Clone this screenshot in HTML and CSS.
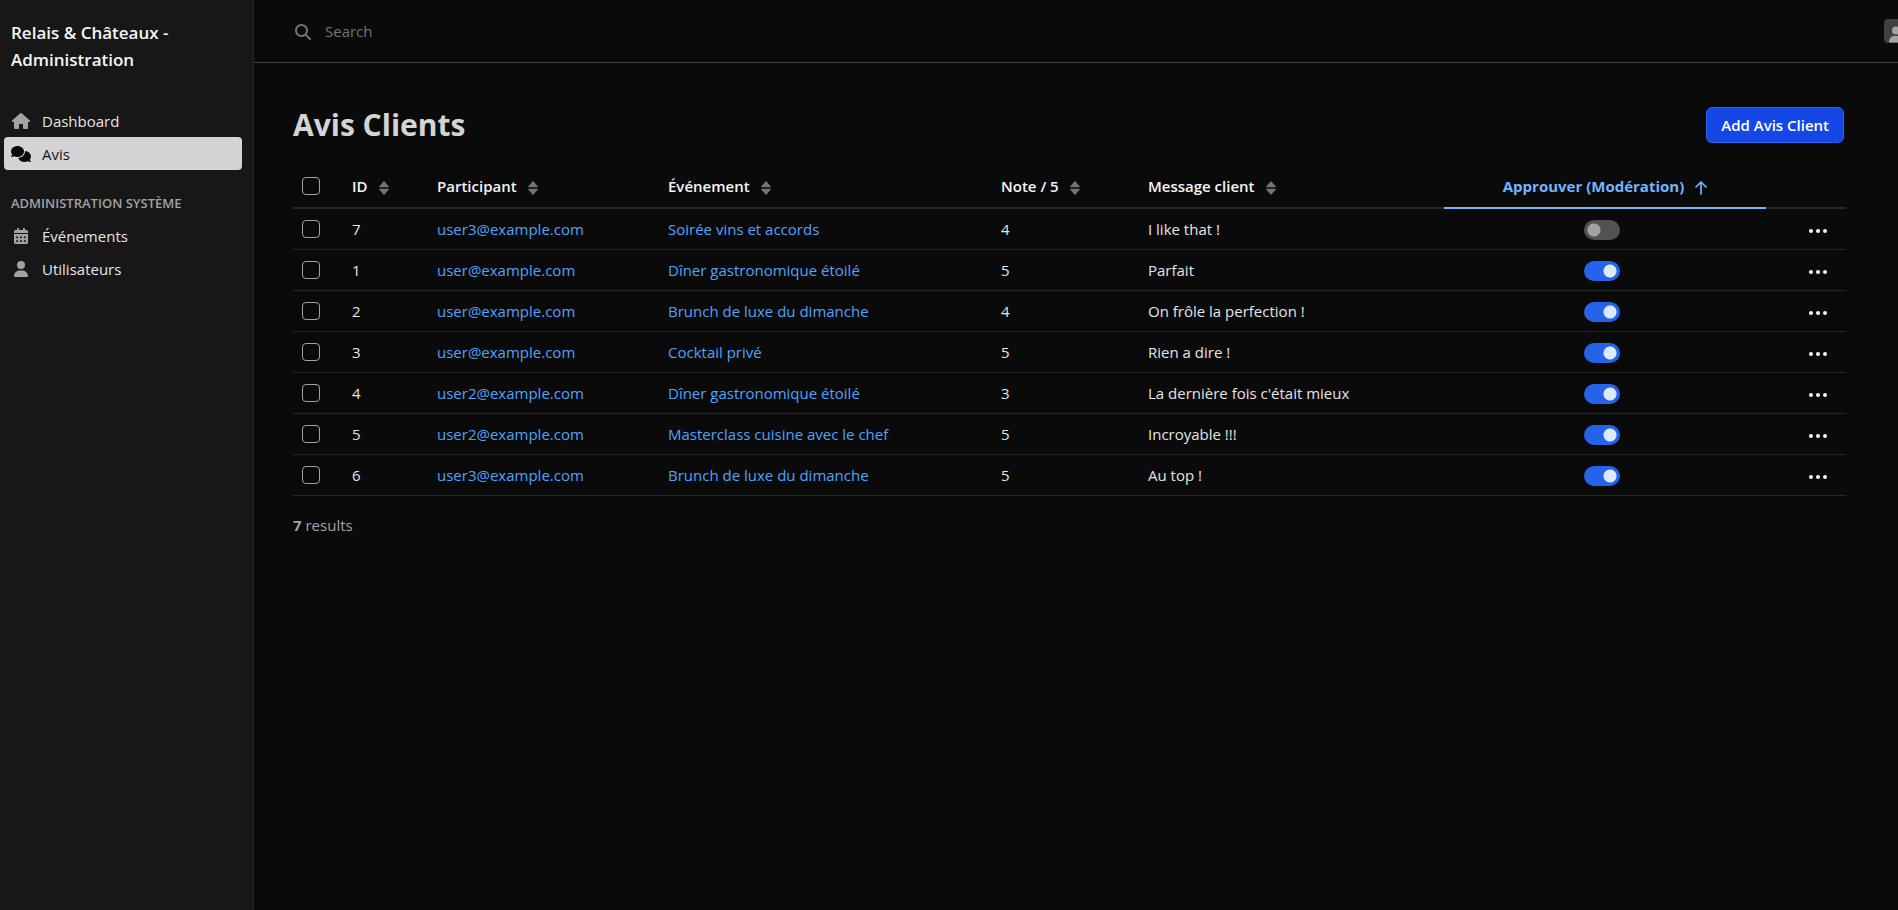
FILE: index.html
```html
<!DOCTYPE html>
<html lang="fr">
<head>
    <meta charset="UTF-8">
    <meta name="viewport" content="width=device-width, initial-scale=1">
    <title>Avis Clients</title>
    <link rel="stylesheet" href="styles.css">
</head>
<body>
    <!-- Icônes -->
    <svg class="sprite" aria-hidden="true">
        <symbol id="i-house" viewBox="0 0 576 512"><path d="M575.8 255.5c0 18-15 32.1-32 32.1h-32l.7 160.2c0 2.7-.2 5.4-.5 8.1V472c0 22.1-17.9 40-40 40H392c-22.1 0-40-17.9-40-40V384c0-17.7-14.3-32-32-32H256c-17.7 0-32 14.3-32 32v88c0 22.1-17.9 40-40 40H104c-22.1 0-40-17.9-40-40V287.6H32c-18 0-32-14-32-32.1c0-9 3-17 10-24L266.4 8c7-7 15-8 22-8s15 2 21 7L564.8 231.5c8 7 12 15 11 24z"/></symbol>
        <symbol id="i-comments" viewBox="0 0 640 512"><path d="M208 352c114.9 0 208-78.8 208-176S322.9 0 208 0S0 78.8 0 176c0 38.6 14.7 74.3 39.6 103.4c-3.5 9.4-8.7 17.7-14.2 24.7c-4.8 6.2-9.7 11-13.3 14.3c-1.8 1.6-3.3 2.9-4.3 3.7l-1.3 1C1 327.2-1.4 334.4 .8 340.9S9.1 352 16 352c21.8 0 43.8-5.6 62.1-12.5c9.2-3.5 17.8-7.4 25.3-11.4C134.1 343.3 169.8 352 208 352zM448 176c0 112.3-99.1 196.9-216.5 207C255.8 457.4 336.4 512 432 512c38.2 0 73.9-8.7 104.7-23.9c7.5 4 16 7.9 25.2 11.4c18.3 6.9 40.3 12.5 62.1 12.5c6.9 0 13.1-4.5 15.2-11.1c2.1-6.6-.2-13.8-5.8-17.9l-1.3-1c-1-.8-2.5-2-4.3-3.7c-3.6-3.3-8.5-8.1-13.3-14.3c-5.5-7-10.7-15.4-14.2-24.7c24.9-29 39.6-64.7 39.6-103.4c0-92.8-84.9-168.9-192.6-175.5c.4 5.1 .6 10.3 .6 15.5z"/></symbol>
        <symbol id="i-calendar" viewBox="0 0 448 512"><path fill-rule="evenodd" d="M128 0c17.7 0 32 14.3 32 32V64H288V32c0-17.7 14.3-32 32-32s32 14.3 32 32V64h48c26.5 0 48 21.5 48 48v48H0V112C0 85.5 21.5 64 48 64H96V32c0-17.7 14.3-32 32-32zM0 192H448V464c0 26.5-21.5 48-48 48H48c-26.5 0-48-21.5-48-48V192zM72 268v56h60v-56zM194 268v56h60v-56zM316 268v56h60v-56zM72 390v56h60v-56zM194 390v56h60v-56zM316 390v56h60v-56z"/></symbol>
        <symbol id="i-user" viewBox="0 0 448 512"><path d="M224 256A128 128 0 1 0 224 0a128 128 0 1 0 0 256zm-45.7 48C79.8 304 0 383.8 0 482.3C0 498.7 13.3 512 29.7 512H418.3c16.4 0 29.7-13.3 29.7-29.7C448 383.8 368.2 304 269.7 304H178.3z"/></symbol>
        <symbol id="i-search" viewBox="0 0 512 512"><path d="M416 208c0 45.9-14.9 88.3-40 122.7L502.6 457.4c12.5 12.5 12.5 32.8 0 45.3s-32.8 12.5-45.3 0L330.7 376c-34.4 25.2-76.8 40-122.7 40C93.1 416 0 322.9 0 208S93.1 0 208 0S416 93.1 416 208zM208 352a144 144 0 1 0 0-288 144 144 0 1 0 0 288z"/></symbol>
        <symbol id="i-sort" viewBox="0 0 10 14"><path d="M5 0L9.7 5.2Q10.2 6.2 9 6.2H1Q-.2 6.2 .3 5.2zM5 14L9.7 8.8Q10.2 7.8 9 7.8H1Q-.2 7.8 .3 8.8z"/></symbol>
        <symbol id="i-up" viewBox="0 0 12 14"><path fill="none" stroke="currentColor" stroke-width="1.7" stroke-linecap="round" stroke-linejoin="round" d="M6 13V1M1 6l5-5 5 5"/></symbol>
        <symbol id="i-dots" viewBox="0 0 18 4"><circle cx="2" cy="2" r="2"/><circle cx="9" cy="2" r="2"/><circle cx="16" cy="2" r="2"/></symbol>
    </svg>

    <div class="wrapper">
        <aside class="sidebar">
            <a href="#" class="logo">Relais &amp; Châteaux - Administration</a>
            <nav class="menu">
                <a href="#" class="menu-item"><span class="menu-icon"><svg><use href="#i-house"/></svg></span>Dashboard</a>
                <a href="#" class="menu-item active"><span class="menu-icon"><svg><use href="#i-comments"/></svg></span>Avis</a>
                <h2 class="menu-header">Administration système</h2>
                <a href="#" class="menu-item"><span class="menu-icon"><svg><use href="#i-calendar"/></svg></span>Événements</a>
                <a href="#" class="menu-item"><span class="menu-icon"><svg><use href="#i-user"/></svg></span>Utilisateurs</a>
            </nav>
        </aside>

        <div class="main">
            <header class="topbar">
                <form class="search">
                    <label for="search"><svg class="search-icon"><use href="#i-search"/></svg></label>
                    <input type="search" id="search" placeholder="Search" aria-label="Search">
                </form>
                <button class="avatar" type="button" aria-label="Utilisateur"><svg><use href="#i-user"/></svg></button>
            </header>

            <main class="content">
                <div class="page-header">
                    <h1>Avis Clients</h1>
                    <button class="btn-primary" type="button">Add Avis Client</button>
                </div>

                <table class="datagrid">
                    <colgroup>
                        <col class="col-check">
                        <col class="col-id">
                        <col class="col-user">
                        <col class="col-event">
                        <col class="col-note">
                        <col class="col-message">
                        <col class="col-approve">
                        <col class="col-actions">
                    </colgroup>
                    <thead>
                        <tr>
                            <th><input type="checkbox" class="check" aria-label="Tout sélectionner"></th>
                            <th><a href="#">ID<svg class="sort"><use href="#i-sort"/></svg></a></th>
                            <th><a href="#">Participant<svg class="sort"><use href="#i-sort"/></svg></a></th>
                            <th><a href="#">Événement<svg class="sort"><use href="#i-sort"/></svg></a></th>
                            <th><a href="#">Note / 5<svg class="sort"><use href="#i-sort"/></svg></a></th>
                            <th><a href="#">Message client<svg class="sort"><use href="#i-sort"/></svg></a></th>
                            <th class="sorted"><a href="#">Approuver (Modération)<svg class="sort-up"><use href="#i-up"/></svg></a></th>
                            <th></th>
                        </tr>
                    </thead>
                    <tbody>
                        <tr>
                            <td><input type="checkbox" class="check" aria-label="Avis 7"></td>
                            <td>7</td>
                            <td><a href="#">user3@example.com</a></td>
                            <td><a href="#">Soirée vins et accords</a></td>
                            <td>4</td>
                            <td>I like that !</td>
                            <td class="center"><input type="checkbox" class="switch" aria-label="Approuver 7"></td>
                            <td class="actions"><button type="button" aria-label="Actions"><svg><use href="#i-dots"/></svg></button></td>
                        </tr>
                        <tr>
                            <td><input type="checkbox" class="check" aria-label="Avis 1"></td>
                            <td>1</td>
                            <td><a href="#">user@example.com</a></td>
                            <td><a href="#">Dîner gastronomique étoilé</a></td>
                            <td>5</td>
                            <td>Parfait</td>
                            <td class="center"><input type="checkbox" class="switch" aria-label="Approuver 1" checked></td>
                            <td class="actions"><button type="button" aria-label="Actions"><svg><use href="#i-dots"/></svg></button></td>
                        </tr>
                        <tr>
                            <td><input type="checkbox" class="check" aria-label="Avis 2"></td>
                            <td>2</td>
                            <td><a href="#">user@example.com</a></td>
                            <td><a href="#">Brunch de luxe du dimanche</a></td>
                            <td>4</td>
                            <td>On frôle la perfection !</td>
                            <td class="center"><input type="checkbox" class="switch" aria-label="Approuver 2" checked></td>
                            <td class="actions"><button type="button" aria-label="Actions"><svg><use href="#i-dots"/></svg></button></td>
                        </tr>
                        <tr>
                            <td><input type="checkbox" class="check" aria-label="Avis 3"></td>
                            <td>3</td>
                            <td><a href="#">user@example.com</a></td>
                            <td><a href="#">Cocktail privé</a></td>
                            <td>5</td>
                            <td>Rien a dire !</td>
                            <td class="center"><input type="checkbox" class="switch" aria-label="Approuver 3" checked></td>
                            <td class="actions"><button type="button" aria-label="Actions"><svg><use href="#i-dots"/></svg></button></td>
                        </tr>
                        <tr>
                            <td><input type="checkbox" class="check" aria-label="Avis 4"></td>
                            <td>4</td>
                            <td><a href="#">user2@example.com</a></td>
                            <td><a href="#">Dîner gastronomique étoilé</a></td>
                            <td>3</td>
                            <td>La dernière fois c'était mieux</td>
                            <td class="center"><input type="checkbox" class="switch" aria-label="Approuver 4" checked></td>
                            <td class="actions"><button type="button" aria-label="Actions"><svg><use href="#i-dots"/></svg></button></td>
                        </tr>
                        <tr>
                            <td><input type="checkbox" class="check" aria-label="Avis 5"></td>
                            <td>5</td>
                            <td><a href="#">user2@example.com</a></td>
                            <td><a href="#">Masterclass cuisine avec le chef</a></td>
                            <td>5</td>
                            <td>Incroyable !!!</td>
                            <td class="center"><input type="checkbox" class="switch" aria-label="Approuver 5" checked></td>
                            <td class="actions"><button type="button" aria-label="Actions"><svg><use href="#i-dots"/></svg></button></td>
                        </tr>
                        <tr>
                            <td><input type="checkbox" class="check" aria-label="Avis 6"></td>
                            <td>6</td>
                            <td><a href="#">user3@example.com</a></td>
                            <td><a href="#">Brunch de luxe du dimanche</a></td>
                            <td>5</td>
                            <td>Au top !</td>
                            <td class="center"><input type="checkbox" class="switch" aria-label="Approuver 6" checked></td>
                            <td class="actions"><button type="button" aria-label="Actions"><svg><use href="#i-dots"/></svg></button></td>
                        </tr>
                    </tbody>
                </table>

                <p class="results"><strong>7</strong> results</p>
            </main>
        </div>
    </div>
</body>
</html>
```

FILE: styles.css
```css
* {
    box-sizing: border-box;
}

body {
    margin: 0;
    background: #0a0a0a;
    color: #e5e5e5;
    font-family: "Segoe UI", "Open Sans", "Noto Sans", sans-serif;
    font-size: 15px;
    line-height: 20px;
    overflow-x: hidden;
}

a {
    color: inherit;
    text-decoration: none;
}

button, input {
    font: inherit;
    margin: 0;
}

svg {
    display: block;
    fill: currentColor;
}

.sprite {
    display: none;
}

.wrapper {
    display: flex;
    min-height: 100vh;
}

/* Menu latéral */
.sidebar {
    flex: none;
    width: 254px;
    padding: 19px 11px 0 4px;
    background: #171717;
    border-right: 1px solid #262626;
}

.logo {
    display: block;
    padding: 0 7px;
    color: #f5f5f5;
    font-size: 17px;
    font-weight: 600;
    line-height: 27px;
}

.menu {
    margin-top: 31px;
}

.menu-item {
    display: flex;
    align-items: center;
    gap: 12px;
    height: 33px;
    padding: 0 7px;
    border-radius: 4px;
}

.menu-icon {
    display: flex;
    justify-content: center;
    width: 19px;
    color: #a3a3a3;
}

.menu-icon svg {
    width: 20px;
    height: 16px;
    flex: none;
}

.active {
    background: #d4d4d4;
    color: #171717;
}

.active .menu-icon {
    color: #0a0a0a;
}

.menu-header {
    margin: 23px 0 6px;
    padding: 0 7px;
    color: #a3a3a3;
    font-size: 13px;
    font-weight: 600;
    line-height: 20px;
    text-transform: uppercase;
    white-space: nowrap;
}

/* Barre du haut */
.main {
    flex: 1;
    min-width: 0;
}

.topbar {
    display: flex;
    align-items: center;
    justify-content: space-between;
    height: 63px;
    padding-left: 41px;
    border-bottom: 1px solid #404040;
}

.search {
    display: flex;
    align-items: center;
    flex: 1;
    gap: 14px;
}

.search-icon {
    width: 16px;
    height: 16px;
    margin-top: 2px;
    color: #737373;
}

.search input {
    flex: 1;
    padding: 0;
    border: 0;
    outline: 0;
    background: transparent;
    color: #e5e5e5;
}

.search input::placeholder {
    color: #737373;
}

.avatar {
    display: flex;
    align-items: flex-end;
    justify-content: center;
    flex: none;
    width: 24px;
    height: 24px;
    margin-right: -10px;
    padding: 0;
    border: 0;
    border-radius: 4px;
    background: #404040;
    color: #a3a3a3;
}

.avatar svg {
    width: 14px;
    height: 17px;
}

/* Contenu */
.content {
    padding: 44px 52px 0 39px;
}

.page-header {
    display: flex;
    align-items: center;
    justify-content: space-between;
    padding-right: 2px;
}

h1 {
    margin: 0;
    color: #d4d4d4;
    font-size: 30px;
    font-weight: 700;
    line-height: 36px;
}

.btn-primary {
    height: 36px;
    padding: 0 14px;
    border: 1px solid #2563eb;
    border-radius: 6px;
    background: #1447e6;
    color: #fff;
    font-weight: 600;
}

.datagrid {
    width: 100%;
    margin-top: 22px;
    border-collapse: separate;
    border-spacing: 0;
    table-layout: fixed;
}

.col-check { width: 50px; }
.col-id { width: 85px; }
.col-user { width: 231px; }
.col-event { width: 333px; }
.col-note { width: 147px; }
.col-message { width: 305px; }
.col-approve { width: 322px; }
.col-actions { width: 80px; }

.datagrid th {
    height: 44px;
    padding: 0 9px;
    border-bottom: 2px solid #262626;
    color: #f5f5f5;
    font-weight: 600;
    text-align: left;
    white-space: nowrap;
}

.datagrid th a {
    display: flex;
    align-items: center;
}

.datagrid .sorted {
    border-bottom-color: #74b4ff;
    color: #74b4ff;
    font-weight: 700;
}

.datagrid .sorted a {
    justify-content: center;
}

.sort {
    width: 10px;
    height: 14px;
    margin: 3px 0 0 11px;
    color: #737373;
}

.sort-up {
    width: 12px;
    height: 14px;
    margin: 3px 0 0 11px;
}

.datagrid td {
    height: 41px;
    padding: 0 9px;
    border-bottom: 1px solid #262626;
    white-space: nowrap;
}

.datagrid td a {
    color: #51a2ff;
}

.datagrid .center {
    padding-right: 15px;
    text-align: center;
}

.check {
    appearance: none;
    display: block;
    width: 18px;
    height: 18px;
    border: 1px solid #a3a3a3;
    border-radius: 4px;
    background: transparent;
}

.check:checked {
    background: #2563eb;
}

.switch {
    appearance: none;
    display: inline-block;
    width: 36px;
    height: 20px;
    border-radius: 10px;
    background: radial-gradient(circle at 10px 10px, #a3a3a3 6px, transparent 7px) #525252;
    vertical-align: middle;
}

.switch:checked {
    background: radial-gradient(circle at 26px 10px, #dbeafe 6px, transparent 7px) #2563eb;
}

.actions button {
    display: block;
    margin-left: auto;
    padding: 12px 10px 8px;
    border: 0;
    background: transparent;
    color: #f5f5f5;
}

.actions svg {
    width: 18px;
    height: 4px;
}

.results {
    margin: 19px 0 0;
    color: #a3a3a3;
}
```
